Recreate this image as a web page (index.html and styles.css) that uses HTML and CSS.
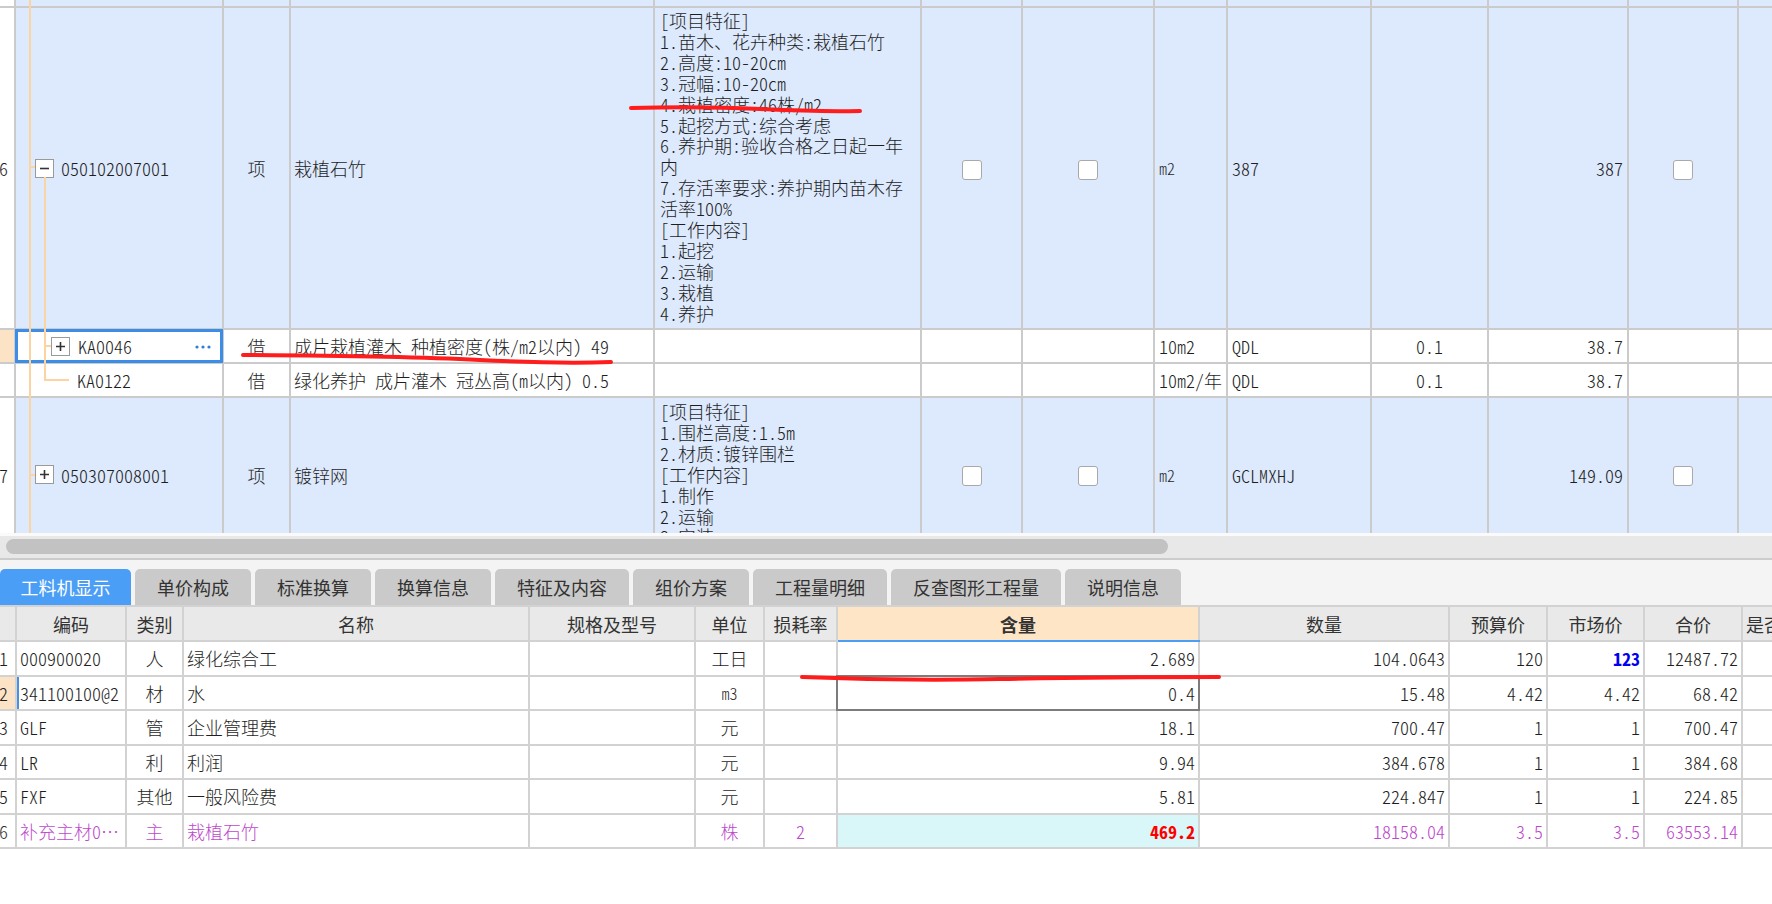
FILE: index.html
```html
<!DOCTYPE html>
<html lang="zh-CN">
<head>
<meta charset="utf-8">
<title>工料机显示</title>
<link rel="stylesheet" href="styles.css">
</head>
<body>
<div class="app">
  <div class="upper">
    <div class="gridclip">
      <table class="grid top">
        <colgroup>
          <col class="t0"><col class="t1"><col class="t2"><col class="t3"><col class="t4"><col class="t5"><col class="t6"><col class="t7"><col class="t8"><col class="t9"><col class="t10"><col class="t11"><col class="t12">
        </colgroup>
        <tbody>
          <tr class="stub blue">
            <td class="rn"></td><td></td><td></td><td></td><td></td><td></td><td></td><td></td><td></td><td></td><td></td><td></td><td></td>
          </tr>
          <tr class="item6 blue">
            <td class="rn"><span>6</span></td>
            <td class="code"><div class="cw lvl0"><span class="tbox"><svg viewBox="0 0 17 17" width="17" height="17"><path d="M4 8.5H13" stroke="#333" stroke-width="1.6"/></svg></span><span>050102007001</span></div></td>
            <td class="ctr">项</td>
            <td class="name">栽植石竹</td>
            <td class="feat">
              <div>[项目特征]</div>
              <div>1.苗木、花卉种类:栽植石竹</div>
              <div>2.高度:10-20cm</div>
              <div>3.冠幅:10-20cm</div>
              <div>4.栽植密度:46株/m2</div>
              <div>5.起挖方式:综合考虑</div>
              <div>6.养护期:验收合格之日起一年</div>
              <div>内</div>
              <div>7.存活率要求:养护期内苗木存</div>
              <div>活率100%</div>
              <div>[工作内容]</div>
              <div>1.起挖</div>
              <div>2.运输</div>
              <div>3.栽植</div>
              <div>4.养护</div>
            </td>
            <td class="ctr"><span class="chk"></span></td>
            <td class="ctr"><span class="chk"></span></td>
            <td class="lft small">m2</td>
            <td class="lft">387</td>
            <td></td>
            <td class="rgt">387</td>
            <td class="ctr"><span class="chk"></span></td>
            <td></td>
          </tr>
          <tr class="sub">
            <td class="rn sel"></td>
            <td class="code focus"><div class="cw lvl1"><span class="tbox"><svg viewBox="0 0 17 17" width="17" height="17"><path d="M4 8.5H13M8.5 4V13" stroke="#333" stroke-width="1.6"/></svg></span><span class="grow">KA0046</span><svg class="dots" width="16" height="6" viewBox="0 0 16 6"><circle cx="2" cy="3" r="1.6" fill="#2f7fd8"/><circle cx="8" cy="3" r="1.6" fill="#2f7fd8"/><circle cx="14" cy="3" r="1.6" fill="#2f7fd8"/></svg></div></td>
            <td class="ctr">借</td>
            <td class="name">成片栽植灌木 种植密度(株/m2以内) 49</td>
            <td></td>
            <td></td>
            <td></td>
            <td class="lft">10m2</td>
            <td class="lft">QDL</td>
            <td class="ctr">0.1</td>
            <td class="rgt">38.7</td>
            <td></td>
            <td></td>
          </tr>
          <tr class="sub">
            <td class="rn"></td>
            <td class="code"><div class="cw lvl2"><span>KA0122</span></div></td>
            <td class="ctr">借</td>
            <td class="name">绿化养护 成片灌木 冠丛高(m以内) 0.5</td>
            <td></td>
            <td></td>
            <td></td>
            <td class="lft">10m2/年</td>
            <td class="lft">QDL</td>
            <td class="ctr">0.1</td>
            <td class="rgt">38.7</td>
            <td></td>
            <td></td>
          </tr>
          <tr class="item7 blue">
            <td class="rn"><span>7</span></td>
            <td class="code"><div class="cw lvl0"><span class="tbox"><svg viewBox="0 0 17 17" width="17" height="17"><path d="M4 8.5H13M8.5 4V13" stroke="#333" stroke-width="1.6"/></svg></span><span>050307008001</span></div></td>
            <td class="ctr">项</td>
            <td class="name">镀锌网</td>
            <td class="feat f7">
              <div>[项目特征]</div>
              <div>1.围栏高度:1.5m</div>
              <div>2.材质:镀锌围栏</div>
              <div>[工作内容]</div>
              <div>1.制作</div>
              <div>2.运输</div>
              <div>3.安装</div>
            </td>
            <td class="ctr"><span class="chk"></span></td>
            <td class="ctr"><span class="chk"></span></td>
            <td class="lft small">m2</td>
            <td class="lft">GCLMXHJ</td>
            <td></td>
            <td class="rgt">149.09</td>
            <td class="ctr"><span class="chk"></span></td>
            <td></td>
          </tr>
        </tbody>
      </table>
    </div>
    <svg class="tree" width="120" height="533" viewBox="0 0 120 533">
      <path d="M30 0V533M30 167H35M30 475H35M45 177V380H69M45 346H51" fill="none" stroke="#fcd4a2" stroke-width="2"/>
    </svg>
    <div class="hscroll"><div class="thumb"></div></div>
  </div>

  <div class="tabbar">
    <div class="tab active">工料机显示</div>
    <div class="tab">单价构成</div>
    <div class="tab">标准换算</div>
    <div class="tab">换算信息</div>
    <div class="tab">特征及内容</div>
    <div class="tab">组价方案</div>
    <div class="tab">工程量明细</div>
    <div class="tab">反查图形工程量</div>
    <div class="tab">说明信息</div>
  </div>

  <div class="lowerclip">
    <table class="grid bottom">
      <colgroup>
        <col class="b0"><col class="b1"><col class="b2"><col class="b3"><col class="b4"><col class="b5"><col class="b6"><col class="b7"><col class="b8"><col class="b9"><col class="b10"><col class="b11"><col class="b12">
      </colgroup>
      <thead>
        <tr>
          <th></th><th>编码</th><th>类别</th><th>名称</th><th>规格及型号</th><th>单位</th><th>损耗率</th><th class="hl">含量</th><th>数量</th><th>预算价</th><th>市场价</th><th>合价</th><th>是否暂估</th>
        </tr>
      </thead>
      <tbody>
        <tr>
          <td class="rn"><span>1</span></td><td class="lft">000900020</td><td class="ctr">人</td><td class="lft">绿化综合工</td><td></td><td class="ctr">工日</td><td></td><td class="rgt">2.689</td><td class="rgt">104.0643</td><td class="rgt">120</td><td class="rgt blueb">123</td><td class="rgt">12487.72</td><td></td>
        </tr>
        <tr>
          <td class="rn sel"><span>2</span></td><td class="lft cur">341100100@2</td><td class="ctr">材</td><td class="lft">水</td><td></td><td class="ctr small">m3</td><td></td><td class="rgt edit">0.4</td><td class="rgt">15.48</td><td class="rgt">4.42</td><td class="rgt">4.42</td><td class="rgt">68.42</td><td></td>
        </tr>
        <tr>
          <td class="rn"><span>3</span></td><td class="lft">GLF</td><td class="ctr">管</td><td class="lft">企业管理费</td><td></td><td class="ctr">元</td><td></td><td class="rgt">18.1</td><td class="rgt">700.47</td><td class="rgt">1</td><td class="rgt">1</td><td class="rgt">700.47</td><td></td>
        </tr>
        <tr>
          <td class="rn"><span>4</span></td><td class="lft">LR</td><td class="ctr">利</td><td class="lft">利润</td><td></td><td class="ctr">元</td><td></td><td class="rgt">9.94</td><td class="rgt">384.678</td><td class="rgt">1</td><td class="rgt">1</td><td class="rgt">384.68</td><td></td>
        </tr>
        <tr>
          <td class="rn"><span>5</span></td><td class="lft">FXF</td><td class="ctr">其他</td><td class="lft">一般风险费</td><td></td><td class="ctr">元</td><td></td><td class="rgt">5.81</td><td class="rgt">224.847</td><td class="rgt">1</td><td class="rgt">1</td><td class="rgt">224.85</td><td></td>
        </tr>
        <tr class="purple">
          <td class="rn"><span>6</span></td><td class="lft">补充主材0…</td><td class="ctr">主</td><td class="lft">栽植石竹</td><td></td><td class="ctr">株</td><td class="ctr">2</td><td class="rgt redb">469.2</td><td class="rgt">18158.04</td><td class="rgt">3.5</td><td class="rgt">3.5</td><td class="rgt">63553.14</td><td></td>
        </tr>
      </tbody>
    </table>
  </div>

  <svg class="marks" width="1772" height="904" viewBox="0 0 1772 904">
    <path d="M631 108 Q700 106 760 109 T860 111" fill="none" stroke="#ff1c1c" stroke-width="4" stroke-linecap="round"/>
    <path d="M243 355 Q400 356 480 360 T611 362" fill="none" stroke="#ff1c1c" stroke-width="4" stroke-linecap="round"/>
    <path d="M802 677 Q900 681 1000 679 T1219 677" fill="none" stroke="#ff1c1c" stroke-width="4" stroke-linecap="round"/>
  </svg>
</div>
</body>
</html>
```

FILE: styles.css
```css
* { box-sizing: border-box; }

html, body {
  margin: 0;
  padding: 0;
  background: #ffffff;
}

body {
  width: 1772px;
  height: 904px;
  overflow: hidden;
  font-family: "Noto Sans CJK SC", "Noto Sans", sans-serif;
  font-size: 18px;
  font-weight: 300;
  color: #1e1e1e;
  font-feature-settings: "hwid" 1;
}

.app {
  position: relative;
  width: 1772px;
  height: 904px;
  display: flex;
  flex-direction: column;
}

.upper {
  position: relative;
  flex: none;
}

.gridclip {
  height: 533px;
  width: 1772px;
  overflow: hidden;
}

.grid {
  border-collapse: collapse;
  table-layout: fixed;
}

.grid td,
.grid th {
  border: 2px solid #cbcbcb;
  padding: 0 4px;
  white-space: nowrap;
  overflow: hidden;
  line-height: 20px;
  vertical-align: middle;
  font-weight: 300;
}

.grid tr > :first-child { border-left: none; }

.top { width: 1798px; }
.t0 { width: 15px; }
.t1 { width: 208px; }
.t2 { width: 67px; }
.t3 { width: 364px; }
.t4 { width: 267px; }
.t5 { width: 101px; }
.t6 { width: 132px; }
.t7 { width: 73px; }
.t8 { width: 144px; }
.t9 { width: 117px; }
.t10 { width: 140px; }
.t11 { width: 110px; }
.t12 { width: 60px; }

.top tr:first-child td { border-top: none; }
.stub td { height: 7px; padding: 0; }
.item6 td { height: 322px; }
.sub td { height: 34px; }
.item7 td { height: 155px; }

.blue td { background: #dde9fc; }
.blue td.rn { background: #ffffff; }

.rn {
  padding: 0 !important;
  text-align: left;
  overflow: hidden;
}
.rn span { margin-left: -1px; }
.grid td.rn.sel { background: #fde3c6; }

.ctr { text-align: center; }
.lft { text-align: left; }
.rgt { text-align: right; }
.small { font-size: 16px; }

.name { padding-left: 3px !important; }

.feat {
  vertical-align: top !important;
  padding: 2px 4px 0 5px !important;
  line-height: 20.9px !important;
}
.feat.f7 { padding-top: 3px !important; }

.code { padding: 0 !important; }
.cw {
  display: flex;
  align-items: center;
  gap: 7px;
}
.cw.lvl0 { padding-left: 19px; }
.cw.lvl1 { padding-left: 35px; padding-right: 11px; gap: 8px; }
.cw.lvl2 { padding-left: 61px; }
.grow { flex: 1; }
.dots { flex: none; margin-top: 2px; }

.code.focus {
  outline: 3px solid #3c8de8;
  outline-offset: -3px;
}

.tbox {
  display: inline-flex;
  width: 19px;
  height: 19px;
  border: 1px solid #9a9a9a;
  background: #ffffff;
  align-items: center;
  justify-content: center;
  flex: none;
}

.chk {
  display: inline-block;
  width: 20px;
  height: 20px;
  border: 1.5px solid #a9a9a9;
  border-radius: 3px;
  background: #ffffff;
  vertical-align: middle;
}

.tree {
  position: absolute;
  left: 0;
  top: 0;
  pointer-events: none;
}

.hscroll {
  height: 25px;
  background: #e8e8e8;
  border-top: 3px solid #fafafa;
  padding: 3px 0 0 6px;
}
.thumb {
  width: 1162px;
  height: 15px;
  border-radius: 8px;
  background: #c2c2c2;
}

.tabbar {
  flex: none;
  height: 47px;
  border-top: 2px solid #cccccc;
  background: #f4f4f4;
  padding-top: 9px;
  display: flex;
  gap: 4px;
  align-items: flex-start;
}

.tab {
  height: 36px;
  padding: 0 22px;
  background: #cacaca;
  color: #333333;
  border-radius: 5px 5px 0 0;
  display: flex;
  align-items: center;
  justify-content: center;
  white-space: nowrap;
  font-weight: 400;
}
.tab.active {
  background: #4a9ef5;
  color: #ffffff;
  padding: 0 20.5px;
}

.lowerclip {
  width: 1772px;
  overflow: hidden;
  flex: none;
}

.bottom { width: 1822px; }
.b0 { width: 16px; }
.b1 { width: 110px; }
.b2 { width: 57px; }
.b3 { width: 346px; }
.b4 { width: 166px; }
.b5 { width: 69px; }
.b6 { width: 73px; }
.b7 { width: 362px; }
.b8 { width: 250px; }
.b9 { width: 98px; }
.b10 { width: 97px; }
.b11 { width: 98px; }
.b12 { width: 80px; }

.bottom td,
.bottom th {
  border-color: #d2d2d2;
  padding: 0 3px;
}
.bottom th {
  height: 35px;
  background: #e9e9e9;
  color: #333333;
  text-align: center;
  font-weight: 400;
}
.bottom th.hl {
  background: #fde5c6;
  font-weight: 700;
  border-bottom-color: #4a9ef5;
}
.bottom td { height: 34.5px; }
.bottom td.rn { background: #ffffff; }
.bottom td.rn.sel { background: #fde3c6; }
.bottom td.cur { box-shadow: inset 2px 0 0 #4a90e2; }
.bottom td.edit {
  outline: 2px solid #7c7c7c;
  outline-offset: -1px;
}

.grid td.blueb { color: #0000f0; font-weight: 700; }
.purple td { color: #bd48cc; }
.purple td.rn { color: #333333; }
.grid .purple td.redb {
  color: #ff0000;
  font-weight: 700;
  background: #d9f7f8;
}

.marks {
  position: absolute;
  left: 0;
  top: 0;
  pointer-events: none;
}
```
